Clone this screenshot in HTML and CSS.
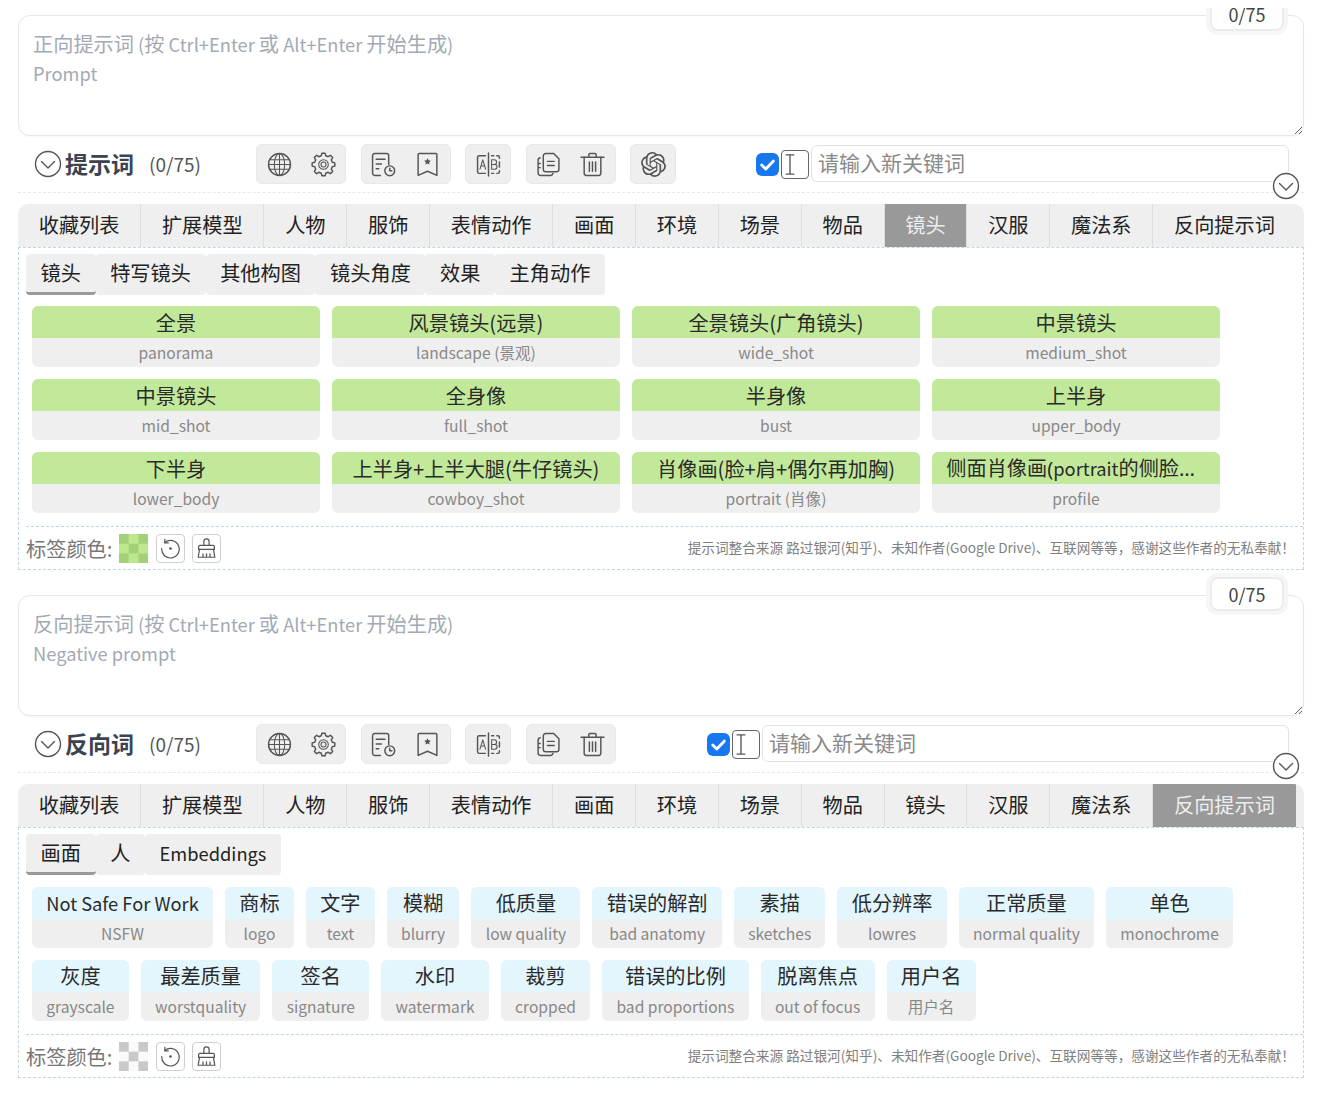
FILE: index.html
```html
<!DOCTYPE html>
<html lang="zh-CN">
<head>
    <meta charset="UTF-8">
    <title>提示词</title>
    <link rel="stylesheet" href="styles.css">
</head>
<body>
    <svg class="sprite" xmlns="http://www.w3.org/2000/svg">
        <symbol id="i-chevron" viewBox="0 0 28 28"><circle cx="14" cy="14" r="12.5"/><path d="M7.5 11.5 14 18l6.5-6.5"/></symbol>
        <symbol id="i-globe" viewBox="0 0 24 24"><circle cx="12" cy="12" r="10.5"/><g class="thin"><ellipse cx="12" cy="12" rx="5" ry="10.5"/><path d="M12 1.5v21M2.8 7.500h18.400M2.800 16.500h18.400M1.500 12h21"/></g></symbol>
        <symbol id="i-gear" viewBox="0 0 24 24"><path d="M9.9 3.56 10.47 1.11H13.53L14.1 3.56 16.48 4.54 18.62 3.22 20.78 5.38 19.46 7.52 20.44 9.9 22.89 10.47V13.53L20.44 14.1 19.46 16.48 20.78 18.62 18.62 20.78 16.48 19.46 14.1 20.44 13.53 22.89H10.47L9.9 20.44 7.52 19.46 5.38 20.78 3.22 18.62 4.54 16.48 3.56 14.1 1.11 13.53V10.47L3.56 9.9 4.54 7.52 3.22 5.38 5.38 3.22 7.52 4.54Z"/><g class="thin"><circle cx="12" cy="12" r="4.6"/><circle cx="12" cy="12" r="2.4"/></g></symbol>
        <symbol id="i-report" viewBox="0 0 24 24"><path d="M9 22.500H3.500a2 2 0 0 1-2-2v-17a2 2 0 0 1 2-2h11.500a2 2 0 0 1 2 2V12"/><path d="M5 7h8.500M5 11.500h5M5 16h2.500"/><circle cx="18" cy="18" r="4.700"/><path d="M18 15.500V18h2"/></symbol>
        <symbol id="i-bookmark" viewBox="0 0 24 24"><path d="M4 1.500h16a1 1 0 0 1 1 1V22.500l-9-4-9 4V2.500a1 1 0 0 1 1-1Z"/><path class="solid" d="m12 6 1 2 2.200.3-1.600 1.500.4 2.200-2-1-2 1 .4-2.200-1.600-1.500 2.200-.3Z"/></symbol>
        <symbol id="i-ab" viewBox="0 0 24 24"><path d="M12 1v22"/><path d="M9 3.500H3a1.500 1.500 0 0 0-1.500 1.500v14A1.500 1.500 0 0 0 3 20.500h6"/><path d="M15 3.500h2M20 3.500h1a1.500 1.500 0 0 1 1.500 1.500v1M22.500 9.500v5M22.500 18v1a1.500 1.500 0 0 1-1.500 1.500h-1M17 20.500h-2"/><path class="thin" d="M3.800 16.500 6.500 7.500l2.700 9M4.700 13.500h3.600"/><path class="thin" d="M15 7.500h2.500a2 2 0 0 1 0 4.500H15Zm0 4.500h3a2.200 2.200 0 0 1 0 4.500h-3Z"/></symbol>
        <symbol id="i-copy" viewBox="0 0 24 24"><path d="M9.500 1.500h7.500l5 5v10a2.500 2.500 0 0 1-2.500 2.500h-10A2.500 2.500 0 0 1 7 16.500V4a2.500 2.500 0 0 1 2.500-2.500Z"/><path d="M11 9h6.500M11 13h6.500"/><path d="M4 5.500a2.500 2.500 0 0 0-2 2.500v12a2.500 2.500 0 0 0 2.500 2.500h9.500a2.500 2.500 0 0 0 2.300-1.800M2 11h2M2 15h2"/></symbol>
        <symbol id="i-trash" viewBox="0 0 24 24"><path d="M1 5h22M8.500 5V2.500a1 1 0 0 1 1-1h5a1 1 0 0 1 1 1V5"/><path d="M4 5v15.500a2 2 0 0 0 2 2h12a2 2 0 0 0 2-2V5"/><path d="M9 9.500v9M12 9.500v9M15 9.500v9"/></symbol>
        <symbol id="i-openai" viewBox="0 0 24 24"><path class="solid" d="M22.2819 9.8211a5.9847 5.9847 0 0 0-.5157-4.9108 6.0462 6.0462 0 0 0-6.5098-2.9A6.0651 6.0651 0 0 0 4.9807 4.1818a5.9847 5.9847 0 0 0-3.9977 2.9 6.0462 6.0462 0 0 0 .7427 7.0966 5.98 5.98 0 0 0 .511 4.9107 6.051 6.051 0 0 0 6.5146 2.9001A5.9847 5.9847 0 0 0 13.2599 24a6.0557 6.0557 0 0 0 5.7718-4.2058 5.9894 5.9894 0 0 0 3.9977-2.9001 6.0557 6.0557 0 0 0-.7475-7.0729zm-9.022 12.6081a4.4755 4.4755 0 0 1-2.8764-1.0408l.1419-.0804 4.7783-2.7582a.7948.7948 0 0 0 .3927-.6813v-6.7369l2.02 1.1686a.071.071 0 0 1 .038.052v5.5826a4.504 4.504 0 0 1-4.4945 4.4944zm-9.6607-4.1254a4.4708 4.4708 0 0 1-.5346-3.0137l.142.0852 4.783 2.7582a.7712.7712 0 0 0 .7806 0l5.8428-3.3685v2.3324a.0804.0804 0 0 1-.0332.0615L9.74 19.9502a4.4992 4.4992 0 0 1-6.1408-1.6464zM2.3408 7.8956a4.485 4.485 0 0 1 2.3655-1.9728V11.6a.7664.7664 0 0 0 .3879.6765l5.8144 3.3543-2.0201 1.1685a.0757.0757 0 0 1-.071 0l-4.8303-2.7865A4.504 4.504 0 0 1 2.3408 7.872zm16.5963 3.8558L13.1038 8.364 15.1192 7.2a.0757.0757 0 0 1 .071 0l4.8303 2.7913a4.4944 4.4944 0 0 1-.6765 8.1042v-5.6772a.79.79 0 0 0-.407-.667zm2.0107-3.0231l-.142-.0852-4.7735-2.7818a.7759.7759 0 0 0-.7854 0L9.409 9.2297V6.8974a.0662.0662 0 0 1 .0284-.0615l4.8303-2.7866a4.4992 4.4992 0 0 1 6.6802 4.66zM8.3065 12.863l-2.02-1.1638a.0804.0804 0 0 1-.038-.0567V6.0742a4.4992 4.4992 0 0 1 7.3757-3.4537l-.142.0805L8.704 5.459a.7948.7948 0 0 0-.3927.6813zm1.0976-2.3654l2.602-1.4998 2.6069 1.4998v2.9994l-2.5974 1.4997-2.6067-1.4997Z"/></symbol>
        <symbol id="i-reset" viewBox="0 0 24 24"><path d="M5.500 5.200A10 10 0 1 1 2 12"/><path d="M5.500 1.500v4h4"/><circle class="solid" cx="12" cy="12" r="1.500"/></symbol>
        <symbol id="i-broom" viewBox="0 0 24 24"><path d="M9 8.500V4a3 3 0 0 1 6 0v4.500"/><path d="M4.500 8.500h15a1.500 1.500 0 0 1 1.500 1.500v3H3v-3a1.500 1.500 0 0 1 1.500-1.500Z"/><path d="M4 13l-1.500 9h19L20 13M8 22v-4M12 22v-4M16 22v-4"/></symbol>
    </svg>

    <div class="app">
        <section class="prompt">
            <div class="text-box">
                <div class="text-input">
                    <p>正向提示词<span class="en"> (</span>按<span class="en"> Ctrl+Enter </span>或<span class="en"> Alt+Enter </span>开始生成<span class="en">)</span></p>
                    <p><span class="en">Prompt</span></p>
                </div>
                <div class="counter">0/75</div>
            </div>
            <div class="toolbar">
                <svg class="toggle"><use href="#i-chevron"/></svg>
                <h2 class="toolbar-title">提示词</h2>
                <span class="toolbar-count">(0/75)</span>
                <div class="tool-group"><svg><use href="#i-globe"/></svg><svg><use href="#i-gear"/></svg></div>
                <div class="tool-group"><svg><use href="#i-report"/></svg><svg><use href="#i-bookmark"/></svg></div>
                <div class="tool-group"><svg><use href="#i-ab"/></svg></div>
                <div class="tool-group"><svg><use href="#i-copy"/></svg><svg><use href="#i-trash"/></svg></div>
                <div class="tool-group"><svg><use href="#i-openai"/></svg></div>
                <div class="keyword">
                    <span class="check"><svg viewBox="0 0 24 24"><path d="M6 12.500l4.200 4.200L18 8.500"/></svg></span>
                    <span class="cursor-box"><svg viewBox="0 0 12 24"><path d="M2 2h8M2 22h8M6 2v20"/></svg></span>
                    <input class="keyword-input" type="text" placeholder="请输入新关键词">
                </div>
                <svg class="toggle toggle-end"><use href="#i-chevron"/></svg>
            </div>
            <nav class="tabs">
                <a>收藏列表</a><a>扩展模型</a><a>人物</a><a>服饰</a><a>表情动作</a><a>画面</a><a>环境</a><a>场景</a><a>物品</a><a class="active">镜头</a><a>汉服</a><a>魔法系</a><a>反向提示词</a>
            </nav>
            <div class="panel">
                <div class="subtabs">
                    <a class="active">镜头</a><a>特写镜头</a><a>其他构图</a><a>镜头角度</a><a>效果</a><a>主角动作</a>
                </div>
                <div class="tags tags-grid">
                    <div class="tag"><b>全景</b><span>panorama</span></div>
                    <div class="tag"><b>风景镜头(远景)</b><span>landscape (景观)</span></div>
                    <div class="tag"><b>全景镜头(广角镜头)</b><span>wide_shot</span></div>
                    <div class="tag"><b>中景镜头</b><span>medium_shot</span></div>
                    <div class="tag"><b>中景镜头</b><span>mid_shot</span></div>
                    <div class="tag"><b>全身像</b><span>full_shot</span></div>
                    <div class="tag"><b>半身像</b><span>bust</span></div>
                    <div class="tag"><b>上半身</b><span>upper_body</span></div>
                    <div class="tag"><b>下半身</b><span>lower_body</span></div>
                    <div class="tag"><b>上半身+上半大腿(牛仔镜头)</b><span>cowboy_shot</span></div>
                    <div class="tag"><b>肖像画(脸+肩+偶尔再加胸)</b><span>portrait (肖像)</span></div>
                    <div class="tag tag-long"><b>侧面肖像画(<i class="en">portrait</i>的侧脸特写镜头)</b><span>profile</span></div>
                </div>
                <div class="panel-footer">
                    <span class="color-label">标签颜色:</span>
                    <span class="swatch"></span>
                    <span class="mini-btn"><svg><use href="#i-reset"/></svg></span>
                    <span class="mini-btn"><svg><use href="#i-broom"/></svg></span>
                    <span class="credits">提示词整合来源 路过银河(知乎)、未知作者(Google Drive)、互联网等等，感谢这些作者的无私奉献！</span>
                </div>
            </div>
        </section>

        <section class="prompt negative">
            <div class="text-box">
                <div class="text-input">
                    <p>反向提示词<span class="en"> (</span>按<span class="en"> Ctrl+Enter </span>或<span class="en"> Alt+Enter </span>开始生成<span class="en">)</span></p>
                    <p><span class="en">Negative prompt</span></p>
                </div>
                <div class="counter">0/75</div>
            </div>
            <div class="toolbar">
                <svg class="toggle"><use href="#i-chevron"/></svg>
                <h2 class="toolbar-title">反向词</h2>
                <span class="toolbar-count">(0/75)</span>
                <div class="tool-group"><svg><use href="#i-globe"/></svg><svg><use href="#i-gear"/></svg></div>
                <div class="tool-group"><svg><use href="#i-report"/></svg><svg><use href="#i-bookmark"/></svg></div>
                <div class="tool-group"><svg><use href="#i-ab"/></svg></div>
                <div class="tool-group"><svg><use href="#i-copy"/></svg><svg><use href="#i-trash"/></svg></div>
                <div class="keyword">
                    <span class="check"><svg viewBox="0 0 24 24"><path d="M6 12.500l4.200 4.200L18 8.500"/></svg></span>
                    <span class="cursor-box"><svg viewBox="0 0 12 24"><path d="M2 2h8M2 22h8M6 2v20"/></svg></span>
                    <input class="keyword-input" type="text" placeholder="请输入新关键词">
                </div>
                <svg class="toggle toggle-end"><use href="#i-chevron"/></svg>
            </div>
            <nav class="tabs">
                <a>收藏列表</a><a>扩展模型</a><a>人物</a><a>服饰</a><a>表情动作</a><a>画面</a><a>环境</a><a>场景</a><a>物品</a><a>镜头</a><a>汉服</a><a>魔法系</a><a class="active">反向提示词</a>
            </nav>
            <div class="panel">
                <div class="subtabs">
                    <a class="active">画面</a><a>人</a><a class="en">Embeddings</a>
                </div>
                <div class="tags tags-flow">
                    <div class="tag"><b class="en">Not Safe For Work</b><span>NSFW</span></div>
                    <div class="tag"><b>商标</b><span>logo</span></div>
                    <div class="tag"><b>文字</b><span>text</span></div>
                    <div class="tag"><b>模糊</b><span>blurry</span></div>
                    <div class="tag"><b>低质量</b><span>low quality</span></div>
                    <div class="tag"><b>错误的解剖</b><span>bad anatomy</span></div>
                    <div class="tag"><b>素描</b><span>sketches</span></div>
                    <div class="tag"><b>低分辨率</b><span>lowres</span></div>
                    <div class="tag"><b>正常质量</b><span>normal quality</span></div>
                    <div class="tag"><b>单色</b><span>monochrome</span></div>
                    <div class="tag"><b>灰度</b><span>grayscale</span></div>
                    <div class="tag"><b>最差质量</b><span>worstquality</span></div>
                    <div class="tag"><b>签名</b><span>signature</span></div>
                    <div class="tag"><b>水印</b><span>watermark</span></div>
                    <div class="tag"><b>裁剪</b><span>cropped</span></div>
                    <div class="tag"><b>错误的比例</b><span>bad proportions</span></div>
                    <div class="tag"><b>脱离焦点</b><span>out of focus</span></div>
                    <div class="tag"><b>用户名</b><span>用户名</span></div>
                </div>
                <div class="panel-footer">
                    <span class="color-label">标签颜色:</span>
                    <span class="swatch"></span>
                    <span class="mini-btn"><svg><use href="#i-reset"/></svg></span>
                    <span class="mini-btn"><svg><use href="#i-broom"/></svg></span>
                    <span class="credits">提示词整合来源 路过银河(知乎)、未知作者(Google Drive)、互联网等等，感谢这些作者的无私奉献！</span>
                </div>
            </div>
        </section>
    </div>
</body>
</html>
```

FILE: styles.css
```css
* {
    box-sizing: border-box;
}

html, body {
    height: 100%;
}

body {
    margin: 0;
    background-color: white;
    font-family: "Noto Sans CJK SC", "Noto Sans", sans-serif;
    color: #222;
}

.sprite {
    display: none;
}

svg {
    fill: none;
    stroke: #555;
    stroke-width: 1.4;
    stroke-linecap: round;
    stroke-linejoin: round;
}

.solid {
    fill: #555;
    stroke: none;
}

.thin {
    stroke-width: 1;
}

/* latin runs are set a little smaller than the chinese around them */
.en {
    font-family: "Noto Sans CJK SC", sans-serif;
    font-size: 18.3px !important;
    font-style: normal;
}

.app {
    margin-top: 8px;
    padding: 7px 21px 0 18px;
    overflow: hidden;
}

.prompt {
    margin-bottom: 25px;
}

.text-box {
    position: relative;
    height: 121px;
}

.text-input {
    height: 100%;
    padding: 13px 14px 0;
    border: 1px solid #e4e7eb;
    border-radius: 12px;
    overflow: auto;
    resize: vertical;
    font-size: 20.2px;
    line-height: 29px;
    color: #a3a9b4;
    box-shadow: 0 1px 2px rgba(0, 0, 0, 0.04);
}

.text-input p {
    margin: 0;
}

.text-input .en {
    line-height: 1;
}

.counter {
    position: absolute;
    top: -16px;
    right: 22px;
    width: 70px;
    height: 30px;
    background-color: white;
    border-radius: 6px;
    box-shadow: 0 0 0 2px #ececec, 0 0 0 6px #f6f6f6;
    font-size: 18px;
    line-height: 30px;
    text-align: center;
    color: #444;
}

.toolbar {
    position: relative;
    display: flex;
    align-items: center;
    height: 57px;
    margin-bottom: 11px;
    padding: 0 15px 0 16px;
    border-bottom: 1px dashed #e8e8e8;
}

.toggle {
    flex: none;
    width: 28px;
    height: 28px;
}

.toggle-end {
    position: absolute;
    right: 4px;
    top: 36px;
    background-color: white;
    border-radius: 50%;
}

.toolbar-title {
    margin: 0 0 2px 3px;
    font-size: 23px;
    font-weight: 700;
    line-height: 32px;
    color: #3c4350;
}

.toolbar-count {
    width: 106px;
    margin: 0 1px 2px 15px;
    font-size: 19px;
    color: #555;
}

.tool-group {
    display: flex;
    align-items: center;
    justify-content: center;
    height: 40px;
    margin-right: 14.5px;
    padding: 0 9.5px;
    gap: 19px;
    background-color: #efefef;
    border: 1px solid #e8e8e8;
    border-radius: 6px;
}

.tool-group svg {
    width: 25px;
    height: 25px;
}

.keyword {
    display: flex;
    flex: 1;
    align-items: center;
    height: 38px;
    margin-left: 65.5px;
}

.negative .keyword {
    margin-left: 77px;
}

.check {
    flex: none;
    width: 23px;
    height: 23px;
    margin-right: 2px;
    background-color: #1677ee;
    border-radius: 6px;
}

.check svg {
    display: block;
    width: 23px;
    height: 23px;
    stroke: white;
    stroke-width: 3;
}

.cursor-box {
    flex: none;
    width: 28px;
    height: 29px;
    margin-right: 2px;
    padding: 2px 0 0 2px;
    border: 1.5px solid #666;
    border-radius: 4px;
}

.cursor-box svg {
    display: block;
    width: 12px;
    height: 23px;
}

.keyword-input {
    flex: 1;
    min-width: 0;
    height: 37px;
    margin-bottom: 1px;
    padding: 0 6px 3px;
    border: 1px solid #e2e2e2;
    border-radius: 6px;
    outline: none;
    font-family: inherit;
    font-size: 21px;
}

.keyword-input::placeholder {
    color: #8a8a8a;
}

.tabs {
    display: flex;
    height: 43px;
    background-color: #efefef;
    border-radius: 10px 10px 0 0;
    overflow: hidden;
}

.tabs a {
    padding: 0 20.72px;
    border-right: 1px solid #dedede;
    font-size: 20.2px;
    line-height: 42px;
}

.tabs a:last-child {
    border-right: none;
}

.tabs a.active {
    background-color: #999;
    color: #eee;
}

.panel {
    padding: 6px 0 0 7px;
    border: 1px dashed #c0d6e0;
}

.subtabs {
    display: inline-flex;
    height: 41px;
    vertical-align: top;
}

.subtabs a {
    padding: 0 14.6px;
    background-color: #efefef;
    border-radius: 4px;
    font-size: 20.2px;
    line-height: 38px;
}

.subtabs a.active {
    border-bottom: 3px solid #999;
}

.tags {
    margin: 11px 0 13px 6px;
    gap: 12px;
}

.tags-grid {
    display: grid;
    grid-template-columns: repeat(4, 288px);
}

.tags-flow {
    display: flex;
    flex-wrap: wrap;
    margin-top: 12px;
    padding-right: 20px;
}

.tag {
    height: 61px;
    min-width: 0;
    background-color: #efefef;
    border-radius: 6px;
    overflow: hidden;
    text-align: center;
}

.tag b {
    display: block;
    height: 32px;
    padding: 0 14.25px;
    background-color: #c2e99a;
    font-size: 20.2px;
    font-weight: 400;
    line-height: 33px;
    white-space: nowrap;
    overflow: hidden;
    text-overflow: ellipsis;
    color: #2a2a2a;
}

/* the browser takes the ellipsis from the first named font */
.tag-long b {
    font-family: "Noto Sans", "Noto Sans CJK SC", sans-serif;
}

.tags-flow .tag b {
    background-color: #e3f5fd;
    line-height: 32px;
}

.tag span {
    display: block;
    padding: 0 14.25px;
    font-size: 15.6px;
    line-height: 28px;
    color: #888;
    white-space: nowrap;
}

.panel-footer {
    display: flex;
    align-items: center;
    height: 43px;
    padding-right: 8px;
    border-top: 1px dashed #c0d6e0;
}

.color-label {
    font-size: 20.2px;
    color: #777;
}

.swatch {
    width: 29px;
    height: 29px;
    margin: 0 8px 0 7px;
    background-color: #a3d178;
    background-image: repeating-conic-gradient(#bfe88e 0 25%, #a3d178 0 50%);
    background-size: 19.4px 19.4px;
}

.negative .swatch {
    background-image: repeating-conic-gradient(#fafafa 0 25%, #c9c9c9 0 50%);
}

.mini-btn {
    display: flex;
    align-items: center;
    justify-content: center;
    width: 29px;
    height: 29px;
    margin-right: 7px;
    border: 1px solid #cfcfcf;
    border-radius: 4px;
}

.mini-btn svg {
    width: 21px;
    height: 21px;
}

.credits {
    margin: 0 0 3px auto;
    font-size: 13.65px;
    color: #808080;
    white-space: nowrap;
}
```
